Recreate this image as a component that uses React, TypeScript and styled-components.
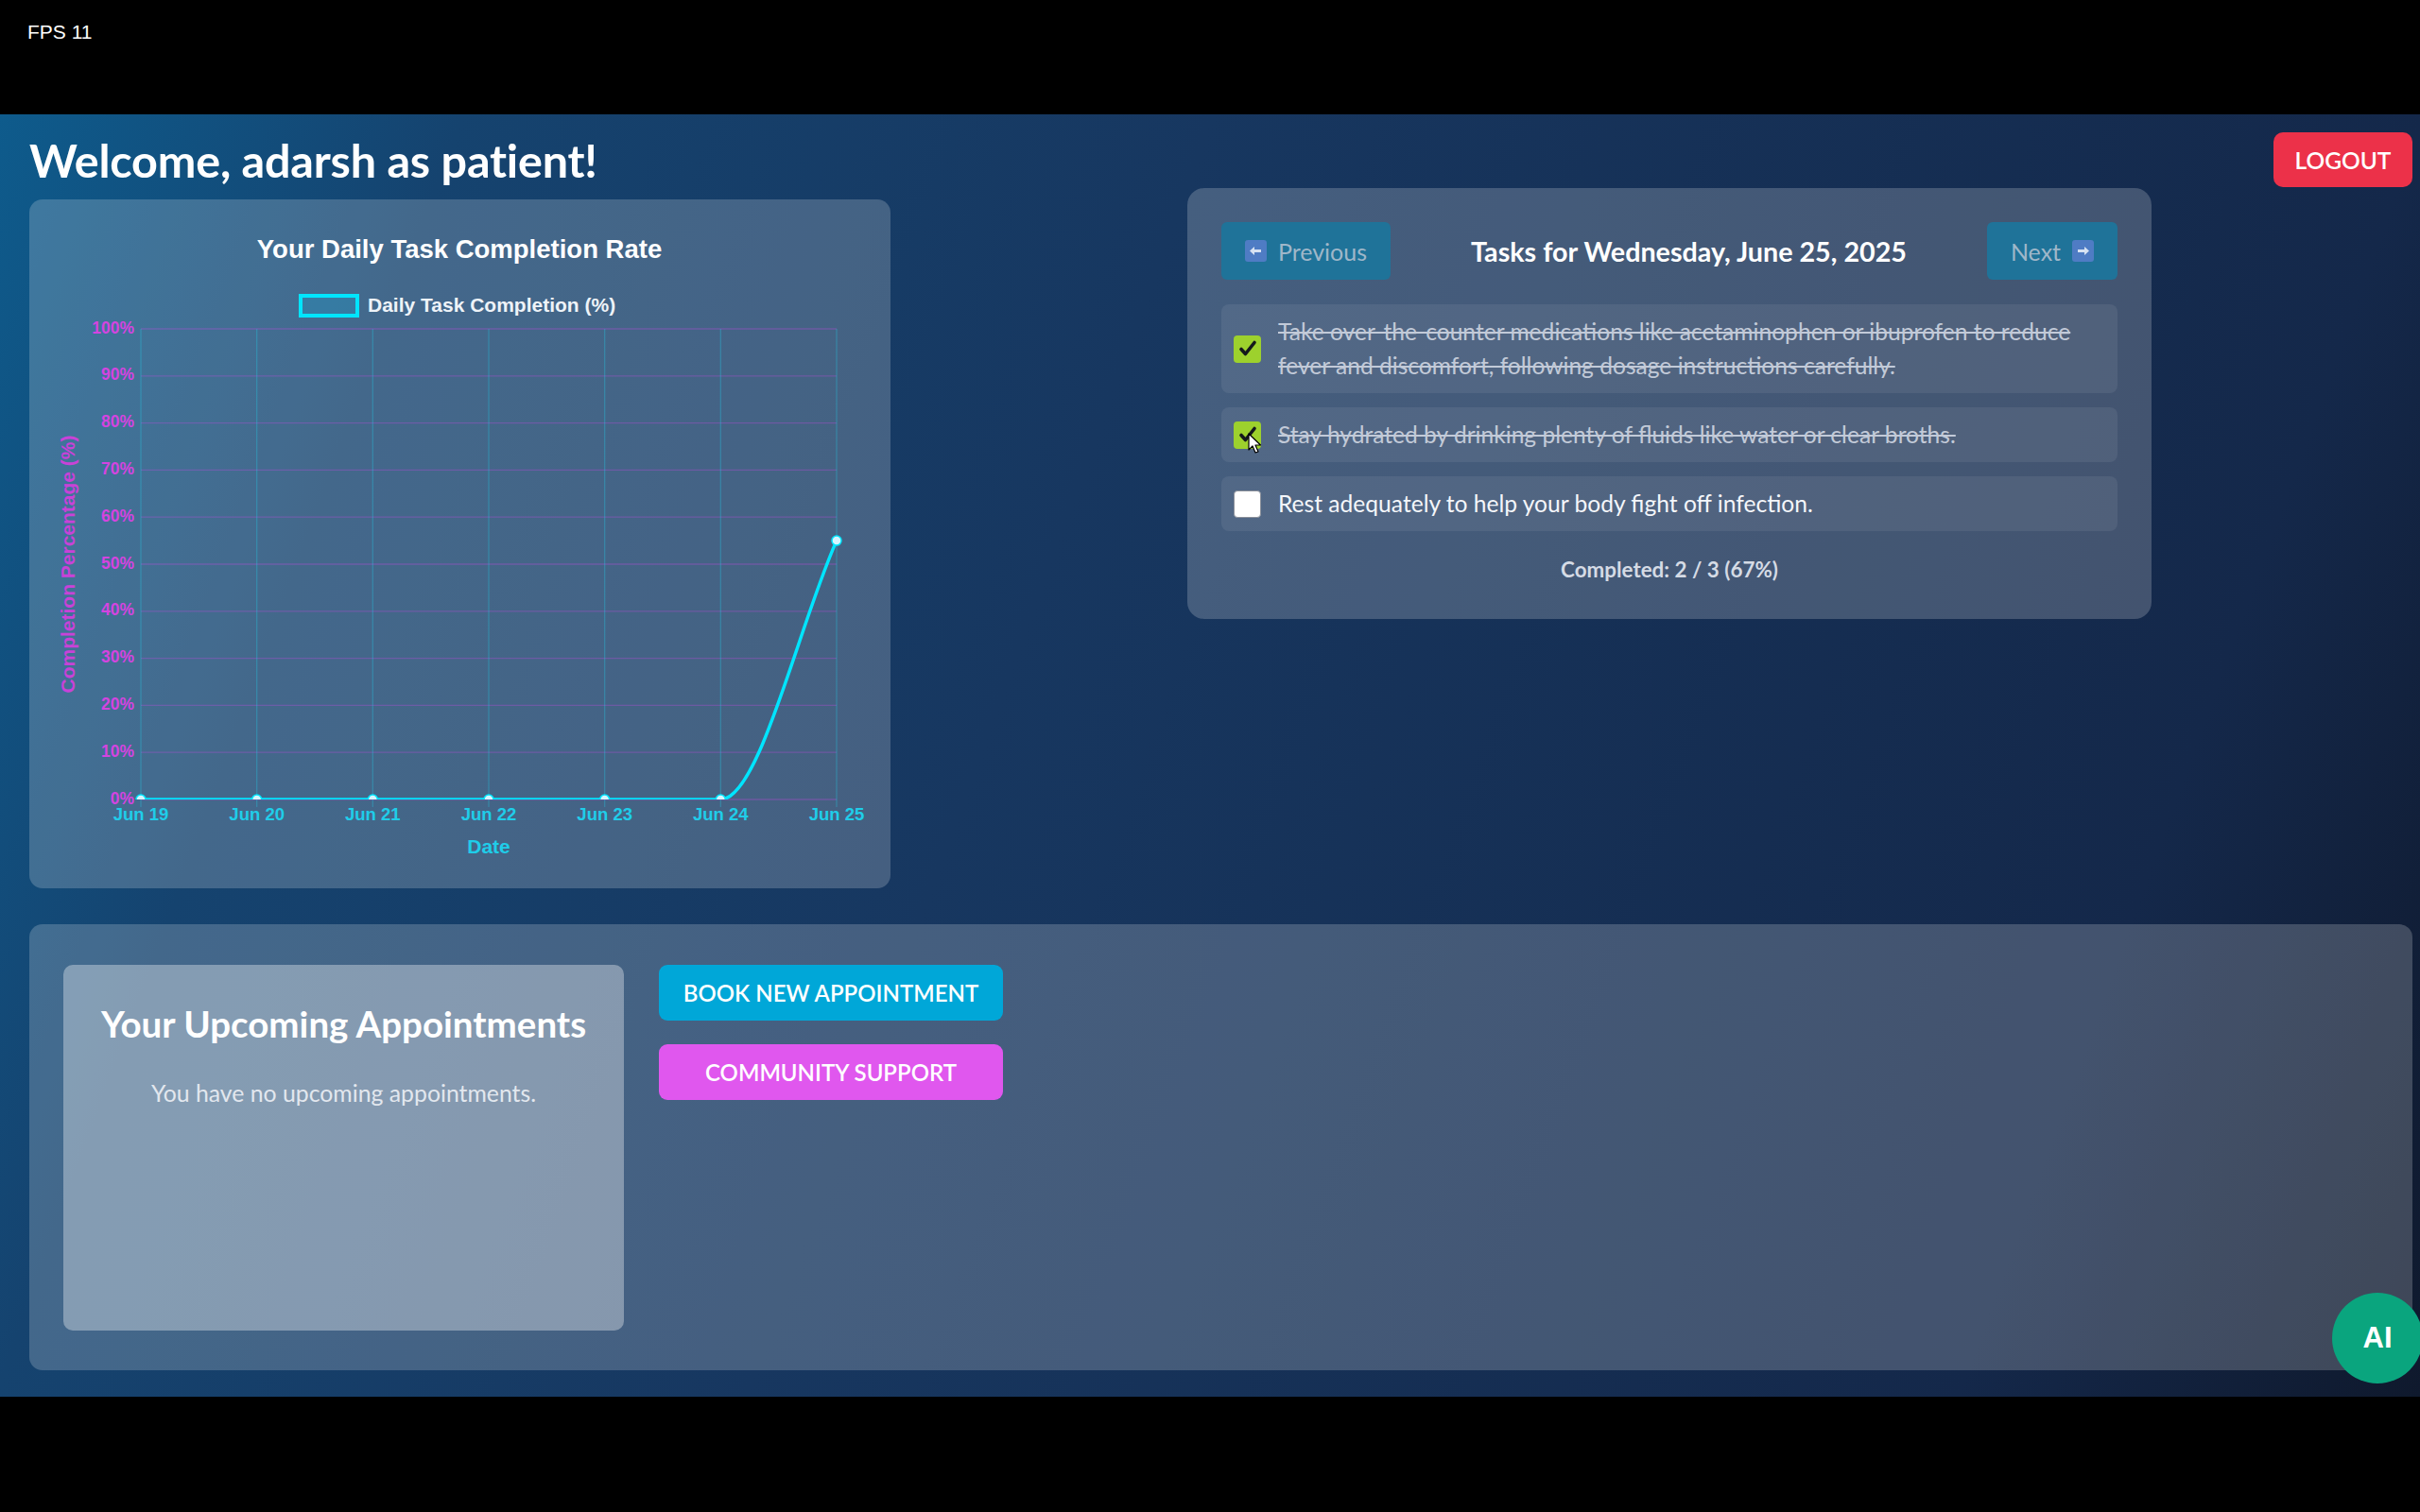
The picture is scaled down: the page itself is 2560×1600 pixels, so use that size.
import React from "react";
import styled, { createGlobalStyle } from "styled-components";

const GlobalStyle = createGlobalStyle`
  html, body { margin: 0; padding: 0; background: #000; }
  body {
    width: 2560px;
    height: 1600px;
    overflow: hidden;
    font-family: Lato, "Open Sans", "Noto Sans", sans-serif;
  }
  * { box-sizing: border-box; }
`;

const Screen = styled.div`
  width: 2560px;
  height: 1600px;
  background: #000;
  display: flex;
  flex-direction: column;
`;

const TopBar = styled.div`
  height: 121px;
  flex: none;
  padding: 22px 0 0 29px;
  color: #fff;
  font: 400 21px "Liberation Sans", Arial, sans-serif;
`;

const AppArea = styled.main`
  height: 1357px;
  flex: none;
  position: relative;
  overflow: hidden;
  padding: 19px 8px 0 31px;
  display: flex;
  flex-direction: column;
  background: linear-gradient(
    110deg,
    #0e5b8c 0%,
    #15436f 16%,
    #173760 42%,
    #14284a 84%,
    #0f192d 100%
  );
`;

const HeaderRow = styled.header`
  display: flex;
  justify-content: space-between;
  align-items: center;
  height: 58px;
`;

const Welcome = styled.h1`
  margin: 0;
  font-size: 48.5px;
  font-weight: 700;
  color: #fff;
  letter-spacing: -0.2px;
`;

const LogoutButton = styled.button`
  width: 147px;
  height: 58px;
  border: none;
  border-radius: 10px;
  background: #ec3149;
  color: #fff;
  font-family: inherit;
  font-size: 24.5px;
  font-weight: 600;
`;

const MainRow = styled.div`
  display: flex;
  gap: 38px;
  margin-top: 1px;
`;

const ChartCard = styled.section`
  flex: none;
  width: 911px;
  height: 729px;
  margin-top: 12px;
  border-radius: 14px;
  background: rgba(255, 255, 255, 0.2);
`;

const TaskColumn = styled.div`
  flex: 1;
  display: flex;
  justify-content: center;
  align-items: flex-start;
`;

const TaskCard = styled.section`
  width: 1020px;
  min-height: 456px;
  padding: 36px;
  border-radius: 18px;
  background: rgba(255, 255, 255, 0.2);
`;

const TaskHeader = styled.div`
  display: flex;
  justify-content: space-between;
  align-items: center;
  height: 61px;
`;

const NavButton = styled.button<{ $w: number }>`
  width: ${(p) => p.$w}px;
  height: 61px;
  border: none;
  border-radius: 6px;
  background: #1f7399;
  color: #9fb7c9;
  font-family: inherit;
  font-size: 25px;
  display: flex;
  align-items: center;
  justify-content: center;
  gap: 12px;
`;

const TaskTitle = styled.h2`
  margin: 0;
  color: #fff;
  font-size: 28.7px;
  font-weight: 700;
`;

const TaskList = styled.ul`
  list-style: none;
  margin: 26px 0 0;
  padding: 0;
  display: flex;
  flex-direction: column;
  gap: 15px;
`;

const TaskRow = styled.li`
  display: flex;
  align-items: center;
  gap: 18px;
  padding: 11px 13px;
  border-radius: 8px;
  background: rgba(255, 255, 255, 0.07);
`;

const CheckWrap = styled.span`
  position: relative;
  flex: none;
  display: flex;
`;

const Check = styled.span<{ $checked: boolean }>`
  width: 29px;
  height: 29px;
  border-radius: 4px;
  display: flex;
  align-items: center;
  justify-content: center;
  background: ${(p) => (p.$checked ? "#9dd12d" : "#fff")};
  border: ${(p) => (p.$checked ? "none" : "1.5px solid #8a8f99")};
`;

const Cursor = styled.svg`
  position: absolute;
  left: 15px;
  top: 12px;
`;

const TaskText = styled.span<{ $done: boolean }>`
  font-size: 24.6px;
  line-height: 36px;
  color: ${(p) => (p.$done ? "#c2cad8" : "#f4f6fa")};
  text-decoration: ${(p) => (p.$done ? "line-through" : "none")};
  text-decoration-thickness: 1.5px;
`;

const Completed = styled.p`
  margin: 28px 0 0;
  text-align: center;
  color: #d5dbe5;
  font-size: 22.4px;
  font-weight: 700;
  line-height: 25px;
`;

const BottomPanel = styled.section`
  margin-top: 38px;
  height: 472px;
  padding: 43px 36px;
  border-radius: 14px;
  background: rgba(255, 255, 255, 0.2);
  display: flex;
  gap: 37px;
  align-items: flex-start;
`;

const AppointmentsBox = styled.div`
  width: 593px;
  height: 387px;
  padding: 40px 10px 0;
  border-radius: 10px;
  background: rgba(255, 255, 255, 0.35);
  text-align: center;
`;

const BoxTitle = styled.h3`
  margin: 0;
  color: #fff;
  font-size: 38.5px;
  font-weight: 700;
  line-height: 44px;
  white-space: nowrap;
`;

const BoxText = styled.p`
  margin: 37px 0 0;
  color: #e2e7ee;
  font-size: 24.8px;
  line-height: 30px;
`;

const ActionColumn = styled.div`
  display: flex;
  flex-direction: column;
  gap: 25px;
`;

const ActionButton = styled.button<{ $bg: string }>`
  width: 364px;
  height: 59px;
  border: none;
  border-radius: 9px;
  background: ${(p) => p.$bg};
  color: #fff;
  font-family: inherit;
  font-size: 24px;
  font-weight: 600;
`;

const AIButton = styled.button`
  position: absolute;
  right: -3px;
  bottom: 14px;
  width: 96px;
  height: 96px;
  border-radius: 50%;
  border: none;
  background: #0aa57e;
  color: #fff;
  font: 700 31px "Liberation Sans", Arial, sans-serif;
`;

const ArrowEmoji = ({ dir }: { dir: "left" | "right" }) => (
  <svg width="23" height="23" viewBox="0 0 23 23">
    <rect x="0" y="0" width="23" height="23" rx="3" fill="#4f7cc4" />
    {dir === "left" ? (
      <path d="M5 11.5 L10 7 V10 H17 V13 H10 V16 Z" fill="#d7e2f2" />
    ) : (
      <path d="M18 11.5 L13 7 V10 H6 V13 H13 V16 Z" fill="#d7e2f2" />
    )}
  </svg>
);

const CheckMark = () => (
  <svg width="20" height="20" viewBox="0 0 20 20">
    <path d="M3 10.5 L7.5 15.5 L17 3.5" fill="none" stroke="#14181c" strokeWidth="3.6" strokeLinecap="round" strokeLinejoin="round" />
  </svg>
);

const labels = ["Jun 19", "Jun 20", "Jun 21", "Jun 22", "Jun 23", "Jun 24", "Jun 25"];
const values = [0, 0, 0, 0, 0, 0, 55];
const X0 = 118;
const X1 = 854;
const YB = 635;
const YT = 137;
const xs = labels.map((_, i) => X0 + (i * (X1 - X0)) / 6);
const yOf = (v: number) => YB - (v / 100) * (YB - YT);

const ChartSvg = () => {
  const dx = xs[1] - xs[0];
  const y6 = yOf(values[6]);
  const d = `M ${xs[0]} ${YB} L ${xs[5]} ${YB} C ${xs[5] + dx / 3} ${YB} ${xs[6] - dx / 3} ${y6 + (YB - y6) / 3} ${xs[6]} ${y6}`;
  const ticks = [0, 10, 20, 30, 40, 50, 60, 70, 80, 90, 100];
  return (
    <svg width="911" height="729" viewBox="0 0 911 729" style={{ display: "block" }}>
      <defs>
        <clipPath id="plotClip">
          <rect x={X0 - 12} y={YT - 12} width={X1 - X0 + 24} height={YB - YT + 12} />
        </clipPath>
      </defs>
      <text x="455" y="55" textAnchor="middle" dominantBaseline="middle" fill="#ffffff" fontFamily="Liberation Sans, Arial, sans-serif" fontWeight="700" fontSize="27.5">
        Your Daily Task Completion Rate
      </text>
      <rect x="287" y="102" width="60" height="21" fill="rgba(0,200,255,0.18)" stroke="#00e5ff" strokeWidth="4" />
      <text x="358" y="113" dominantBaseline="middle" fill="#eef3f8" fontFamily="Liberation Sans, Arial, sans-serif" fontWeight="700" fontSize="21">
        Daily Task Completion (%)
      </text>
      {ticks.map((t) => (
        <line key={"h" + t} x1={X0} x2={X1} y1={yOf(t)} y2={yOf(t)} stroke="rgba(214,70,239,0.28)" strokeWidth="1.3" />
      ))}
      {xs.map((x, i) => (
        <line key={"v" + i} x1={x} x2={x} y1={YT} y2={YB + 8} stroke="rgba(34,211,238,0.3)" strokeWidth="1.3" />
      ))}
      {ticks.map((t) => (
        <text key={"yl" + t} x="111" y={yOf(t)} textAnchor="end" dominantBaseline="middle" fill="#d444e0" fontFamily="Liberation Sans, Arial, sans-serif" fontWeight="700" fontSize="17.5">
          {t}%
        </text>
      ))}
      {labels.map((l, i) => (
        <text key={"xl" + i} x={xs[i]} y="652" textAnchor="middle" dominantBaseline="middle" fill="#1fcde9" fontFamily="Liberation Sans, Arial, sans-serif" fontWeight="700" fontSize="18.5">
          {l}
        </text>
      ))}
      <text x="486" y="686" textAnchor="middle" dominantBaseline="middle" fill="#1fcde9" fontFamily="Liberation Sans, Arial, sans-serif" fontWeight="700" fontSize="21">
        Date
      </text>
      <text
        x="0"
        y="0"
        transform={`translate(42 386) rotate(-90)`}
        textAnchor="middle"
        dominantBaseline="middle"
        fill="#c842d8"
        fontFamily="Liberation Sans, Arial, sans-serif"
        fontWeight="700"
        fontSize="21"
      >
        Completion Percentage (%)
      </text>
      <g clipPath="url(#plotClip)">
        <path d={d} fill="none" stroke="#00e5ff" strokeWidth="3.5" strokeLinejoin="round" />
        {xs.map((x, i) => (
          <circle key={"p" + i} cx={x} cy={yOf(values[i])} r="5" fill="#d4f5ff" stroke="#00e5ff" strokeWidth="1.5" />
        ))}
      </g>
    </svg>
  );
};

const tasks = [
  { text: "Take over-the-counter medications like acetaminophen or ibuprofen to reduce fever and discomfort, following dosage instructions carefully.", done: true },
  { text: "Stay hydrated by drinking plenty of fluids like water or clear broths.", done: true, cursor: true },
  { text: "Rest adequately to help your body fight off infection.", done: false },
];

export default function App() {
  return (
    <>
      <GlobalStyle />
      <Screen>
        <TopBar>FPS 11</TopBar>
        <AppArea>
          <HeaderRow>
            <Welcome>Welcome, adarsh as patient!</Welcome>
            <LogoutButton>LOGOUT</LogoutButton>
          </HeaderRow>
          <MainRow>
            <ChartCard>
              <ChartSvg />
            </ChartCard>
            <TaskColumn>
              <TaskCard>
                <TaskHeader>
                  <NavButton $w={179}>
                    <ArrowEmoji dir="left" />
                    Previous
                  </NavButton>
                  <TaskTitle>Tasks for Wednesday, June 25, 2025</TaskTitle>
                  <NavButton $w={138}>
                    Next
                    <ArrowEmoji dir="right" />
                  </NavButton>
                </TaskHeader>
                <TaskList>
                  {tasks.map((t, i) => (
                    <TaskRow key={i}>
                      <CheckWrap>
                        <Check $checked={t.done}>{t.done && <CheckMark />}</Check>
                        {t.cursor && (
                          <Cursor width="16" height="24" viewBox="0 0 16 24">
                            <path d="M1 1 L1 18 L5 14 L8 21 L11 20 L8 13 L13.5 13 Z" fill="#fff" stroke="#000" strokeWidth="1.2" strokeLinejoin="round" />
                          </Cursor>
                        )}
                      </CheckWrap>
                      <TaskText $done={t.done}>{t.text}</TaskText>
                    </TaskRow>
                  ))}
                </TaskList>
                <Completed>Completed: 2 / 3 (67%)</Completed>
              </TaskCard>
            </TaskColumn>
          </MainRow>
          <BottomPanel>
            <AppointmentsBox>
              <BoxTitle>Your Upcoming Appointments</BoxTitle>
              <BoxText>You have no upcoming appointments.</BoxText>
            </AppointmentsBox>
            <ActionColumn>
              <ActionButton $bg="#00a7d8">BOOK NEW APPOINTMENT</ActionButton>
              <ActionButton $bg="#e057ee">COMMUNITY SUPPORT</ActionButton>
            </ActionColumn>
          </BottomPanel>
          <AIButton>AI</AIButton>
        </AppArea>
      </Screen>
    </>
  );
}
